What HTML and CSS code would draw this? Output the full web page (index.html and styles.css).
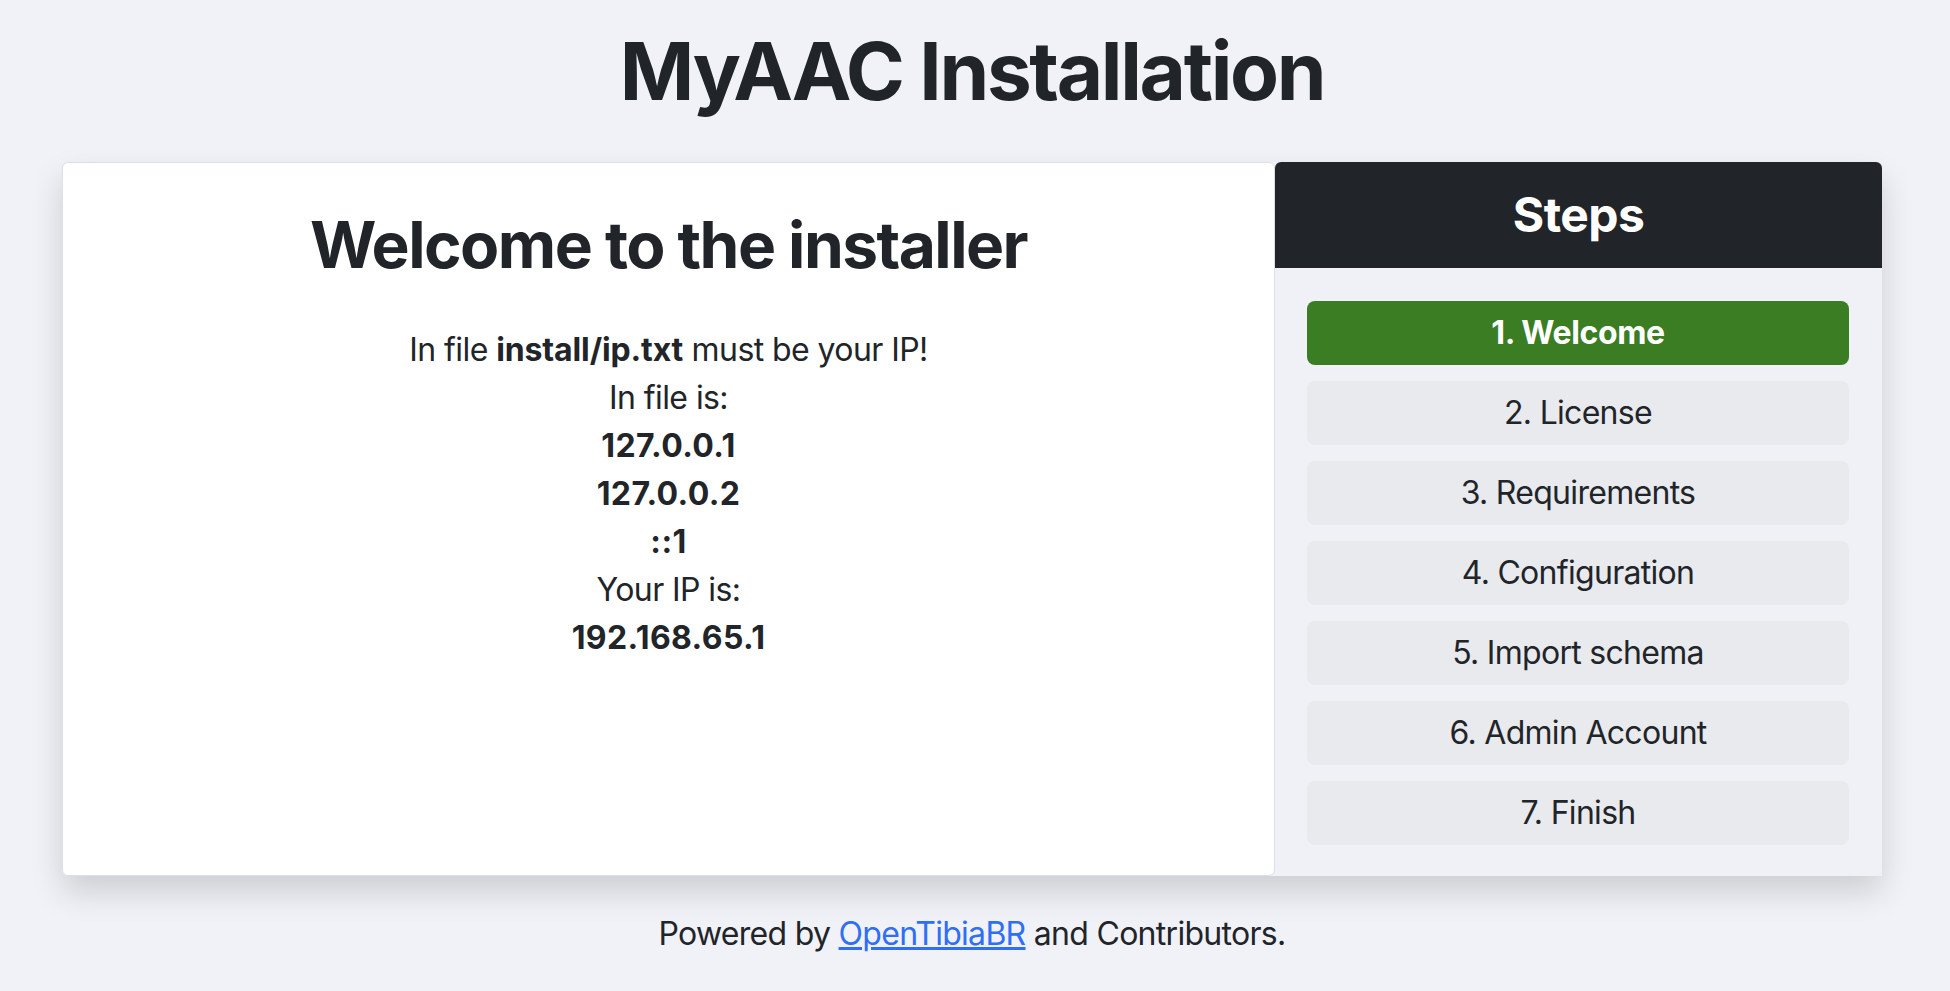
FILE: index.html
```html
<!DOCTYPE html>
<html lang="en">
<head>
<meta charset="utf-8">
<title>MyAAC Installation</title>
<link rel="stylesheet" href="styles.css">
</head>
<body>
<div class="page">
  <h1 class="title">MyAAC Installation</h1>
  <div class="panel">
    <main class="content-card">
      <h2 class="welcome">Welcome to the installer</h2>
      <div class="info">
        <div>In file <b class="path">install/ip.txt</b> must be your IP!</div>
        <div>In file is:</div>
        <div><b class="ip">127.0.0.1</b></div>
        <div><b class="ip">127.0.0.2</b></div>
        <div><b class="ip">::1</b></div>
        <div>Your IP is:</div>
        <div><b class="ip">192.168.65.1</b></div>
      </div>
    </main>
    <aside class="steps">
      <div class="steps-head"><h3 class="steps-title">Steps</h3></div>
      <div class="steps-body">
        <div class="step step-active">1. Welcome</div>
        <div class="step">2. License</div>
        <div class="step">3. Requirements</div>
        <div class="step">4. Configuration</div>
        <div class="step">5. Import schema</div>
        <div class="step">6. Admin Account</div>
        <div class="step">7. Finish</div>
      </div>
    </aside>
  </div>
  <footer class="footer">Powered by <a href="#" class="footer-link">OpenTibiaBR</a> and Contributors.</footer>
</div>
</body>
</html>
```
FILE: styles.css
```css
html, body {
  margin: 0;
  padding: 0;
}
body {
  background: #f1f2f7;
  color: #212529;
  font-family: Inter, "Noto Sans", "Liberation Sans", sans-serif;
  font-size: 32px;
  line-height: 1.5;
  letter-spacing: -0.022em;
}
.page {
  width: 1820px;
  margin-left: 62px;
}
.title {
  font-size: 80px;
  font-weight: 700;
  line-height: 1.2;
  letter-spacing: -0.029em;
  text-align: center;
  margin: 23px 0 43px;
}
.panel {
  display: grid;
  grid-template-columns: 1213px 607px;
  border-radius: 6px;
  box-shadow: 0 16px 32px rgba(0, 0, 0, 0.15);
}
.content-card {
  background: #ffffff;
  border: 1px solid #dcdfe3;
  border-radius: 6px;
  padding: 44px 16px 16px;
  text-align: center;
}
.welcome {
  font-size: 64px;
  font-weight: 700;
  line-height: 1.2;
  letter-spacing: -0.024em;
  margin: 0 0 42px;
}
.info {
  letter-spacing: -0.018em;
}
.path {
  font-weight: 700;
  letter-spacing: -0.004em;
}
.ip {
  font-weight: 700;
  letter-spacing: 0.012em;
}
.steps {
  background: #f0f1f6;
  display: flex;
  flex-direction: column;
}
.steps-head {
  background: #212529;
  border-radius: 6px 6px 0 0;
  padding: 24px 0;
  text-align: center;
}
.steps-title {
  margin: 0;
  color: #ffffff;
  font-size: 48px;
  font-weight: 700;
  line-height: 1.2;
  letter-spacing: -0.012em;
}
.steps-body {
  display: flex;
  flex-direction: column;
  gap: 16px;
  padding: 33px 33px 31px 32px;
}
.step {
  background: #e9eaed;
  border-radius: 8px;
  padding: 8px 0;
  text-align: center;
  color: #212529;
}
.step-active {
  background: #3a7d23;
  color: #ffffff;
  font-weight: 700;
  letter-spacing: -0.012em;
}
.footer {
  margin-top: 34px;
  text-align: center;
}
.footer-link {
  color: #2f6ef5;
  text-decoration: underline;
}
```
